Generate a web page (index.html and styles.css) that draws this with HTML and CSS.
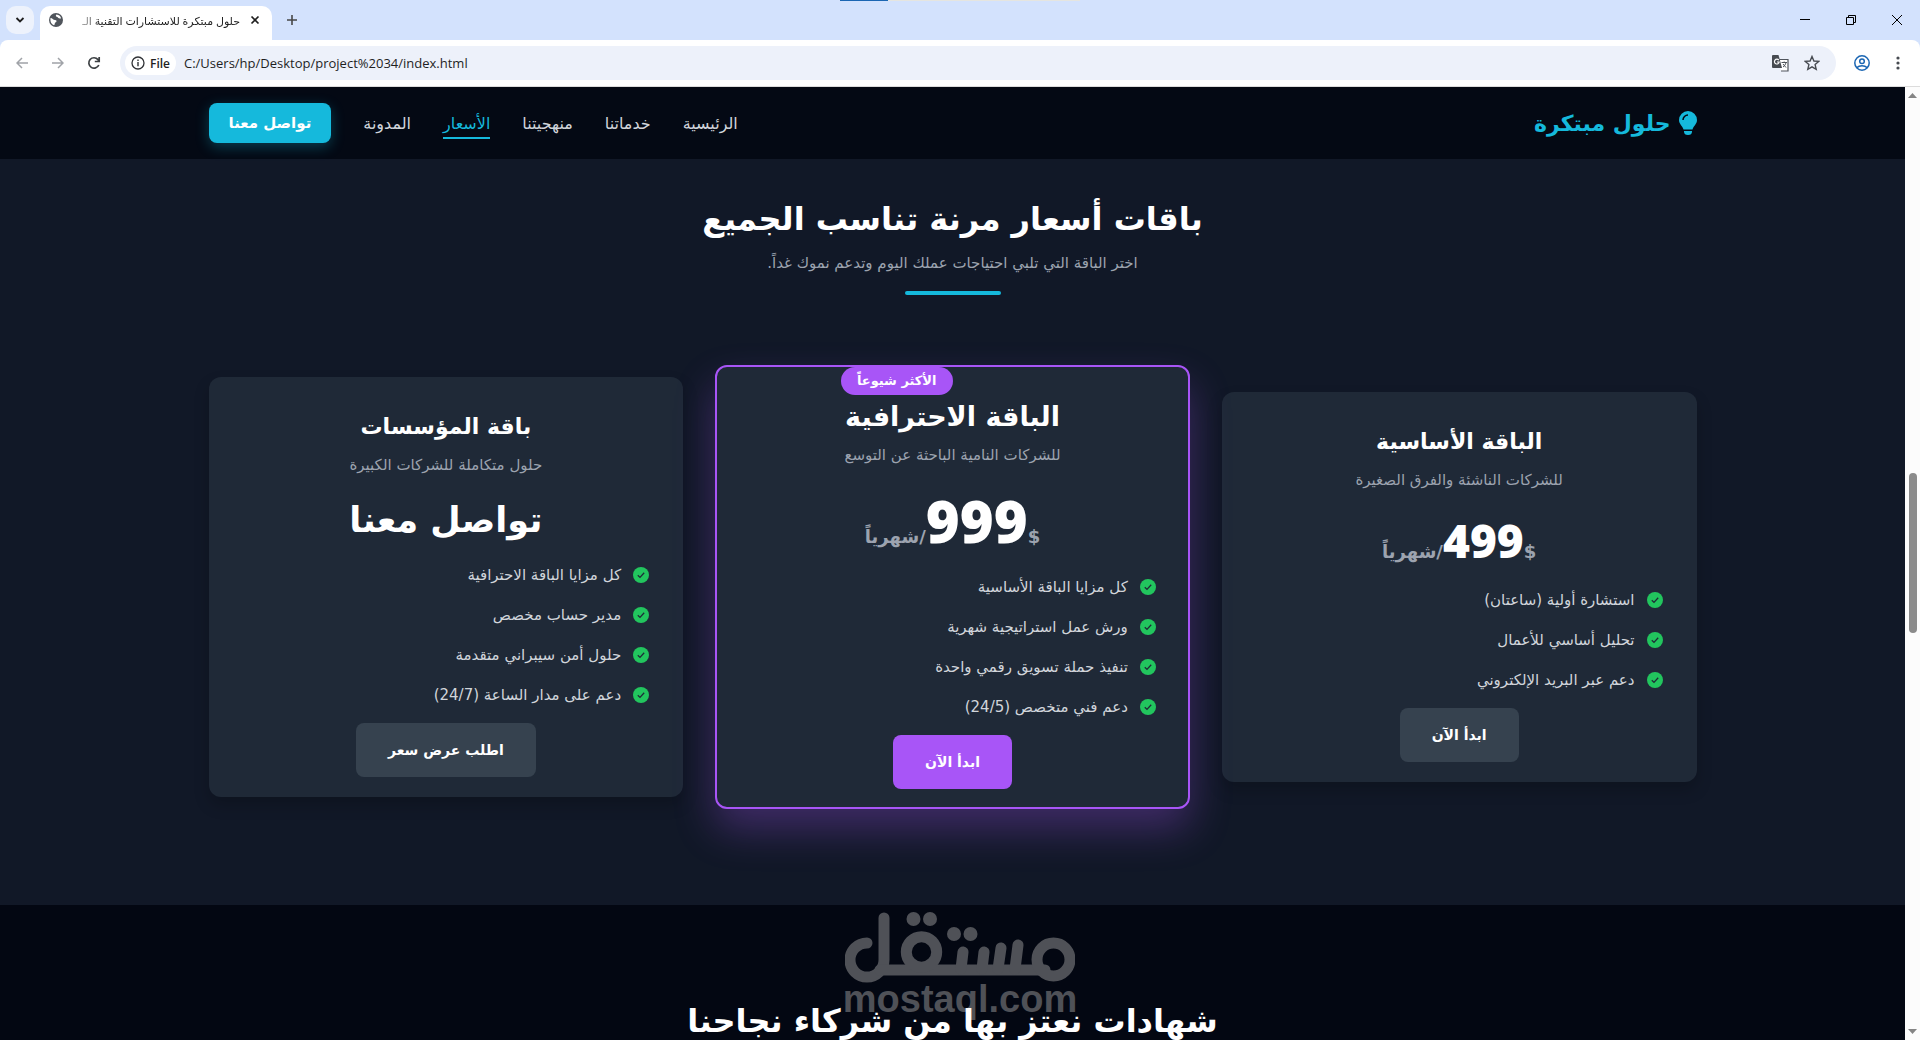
FILE: index.html
```html
<!DOCTYPE html>
<html lang="ar" dir="rtl">
<head>
    <meta charset="UTF-8">
    <meta name="viewport" content="width=device-width, initial-scale=1.0">
    <title>حلول مبتكرة للاستشارات التقنية</title>
    <link rel="stylesheet" href="styles.css">
</head>
<body>
    <svg class="sprite" aria-hidden="true">
        <symbol id="check" viewBox="0 0 16 16">
            <circle cx="8" cy="8" r="8" fill="#22c55e"/>
            <path d="M4.8 8.3 7 10.4 11.2 5.8" fill="none" stroke="#1f2937" stroke-width="1.3"/>
        </symbol>
    </svg>

    <!-- Browser window -->
    <div class="browser" dir="ltr">
        <div class="load-line"><span></span></div>
        <div class="tab-strip">
            <button class="tab-search" aria-label="Search tabs">
                <svg width="10" height="10" viewBox="0 0 10 10"><path d="M1.5 3 5 6.5 8.5 3" fill="none" stroke="#1f1f1f" stroke-width="1.8"/></svg>
            </button>
            <div class="tab">
                <svg width="14" height="14" viewBox="0 0 14 14">
                    <circle cx="7" cy="7" r="7" fill="#50555c"/>
                    <path d="M1.500 5C3.500 5 4 7 6 7c2 0 2 2 .3 2.500C5.500 10 6 12 5 12.200 2.500 11.500 1 8.500 1.500 5zM7.500 1.500c-1.500 1.500 0 2.500 1 2.500.5 1.500 2 1.500 3.500 1.500C12 3.500 10 1.800 7.500 1.500z" fill="#fff"/>
                </svg>
                <span class="tab-title" dir="rtl">حلول مبتكرة للاستشارات التقنية الـ</span>
                <button class="tab-close" aria-label="Close tab">
                    <svg width="10" height="10" viewBox="0 0 10 10"><path d="M1.500 1.500 8.500 8.500M8.500 1.500 1.500 8.500" stroke="#1f1f1f" stroke-width="1.700"/></svg>
                </button>
            </div>
            <button class="new-tab" aria-label="New tab">
                <svg width="12" height="12" viewBox="0 0 12 12"><path d="M6 1v10M1 6h10" stroke="#474747" stroke-width="1.600"/></svg>
            </button>
            <div class="window-buttons">
                <button aria-label="Minimize"><svg width="10" height="10" viewBox="0 0 10 10"><path d="M0 4.500h10" stroke="#000"/></svg></button>
                <button aria-label="Restore"><svg width="10" height="10" viewBox="0 0 10 10"><path d="M.5 2.500h7v7h-7zM2.500 2.500v-2h7v7h-2" fill="none" stroke="#000"/></svg></button>
                <button aria-label="Close"><svg width="10" height="10" viewBox="0 0 10 10"><path d="M0 0 10 10M10 0 0 10" stroke="#000"/></svg></button>
            </div>
        </div>
        <div class="toolbar">
            <button aria-label="Back"><svg width="12" height="12" viewBox="0 0 12 12"><path d="M12 6H1M6 1 1 6l5 5" fill="none" stroke="#a0a3a8" stroke-width="1.500"/></svg></button>
            <button aria-label="Forward"><svg width="12" height="12" viewBox="0 0 12 12"><path d="M0 6h11M6 1l5 5-5 5" fill="none" stroke="#a0a3a8" stroke-width="1.500"/></svg></button>
            <button aria-label="Reload"><svg width="14" height="14" viewBox="0 0 14 14"><path d="M11.800 9A5.200 5.200 0 1 1 11 3.600L12.200 5M12.200 1v4.500H7.800" fill="none" stroke="#3c4043" stroke-width="1.700"/></svg></button>
            <div class="address-bar">
                <button class="site-info">
                    <svg width="14" height="14" viewBox="0 0 14 14"><circle cx="7" cy="7" r="6" fill="none" stroke="#303236" stroke-width="1.300"/><path d="M7 6v4.200M7 3.600v1.400" stroke="#303236" stroke-width="1.400"/></svg>
                    File
                </button>
                <input type="text" aria-label="Address" value="C:/Users/hp/Desktop/project%2034/index.html">
                <button aria-label="Translate">
                    <svg width="17" height="17" viewBox="0 0 17 17">
                        <path d="M7 4.500h9v11.500H9" fill="#fff" stroke="#50555c" stroke-width="1.200"/>
                        <path d="M1 0h5.500L10 13H1a1 1 0 0 1-1-1V1a1 1 0 0 1 1-1z" fill="#474b51"/>
                        <path d="M6.800 5.200A2.400 2.400 0 1 0 7.200 7H5" fill="none" stroke="#fff" stroke-width="1.200"/>
                        <path d="M9.500 7.500H15M12.200 6.500v1M14 7.500c-.5 2-1.500 3.500-3 4.500M11 9l3 3.500" fill="none" stroke="#50555c"/>
                    </svg>
                </button>
                <button aria-label="Bookmark">
                    <svg width="16" height="16" viewBox="0 0 16 16"><path d="M8 1.500 9.900 6l4.800.4-3.600 3.200 1.100 4.700L8 11.800l-4.200 2.500 1.100-4.700L1.300 6.400 6.100 6z" fill="none" stroke="#474b51" stroke-width="1.400"/></svg>
                </button>
            </div>
            <button aria-label="Profile"><svg width="16" height="16" viewBox="0 0 16 16"><g fill="none" stroke="#1b66b3" stroke-width="1.500"><circle cx="8" cy="8" r="7.200"/><circle cx="8" cy="6.300" r="2.300"/><path d="M2.800 12.600C5.500 10.200 10.500 10.200 13.200 12.600"/></g></svg></button>
            <button aria-label="Menu"><svg width="4" height="14" viewBox="0 0 4 14" fill="#474b51"><circle cx="2" cy="2" r="1.600"/><circle cx="2" cy="7" r="1.600"/><circle cx="2" cy="12" r="1.600"/></svg></button>
        </div>
    </div>

    <div class="viewport" dir="ltr">
        <div class="page" dir="rtl">
            <header class="site-header">
                <div class="container header-row">
                    <a href="#" class="logo">
                        <svg width="18" height="24" viewBox="0 0 18 24">
                            <path d="M9 0a9 9 0 0 1 9 9c0 4-3.500 6-4.500 9.500h-9C3.500 15 0 13 0 9a9 9 0 0 1 9-9z" fill="#15b9dc"/>
                            <path d="M4 9a5 5 0 0 1 5-5" fill="none" stroke="#040914" stroke-width="1.500"/>
                            <path d="M5 20h8v.5a4 3.500 0 0 1-8 0z" fill="#15b9dc"/>
                        </svg>
                        حلول مبتكرة
                    </a>
                    <nav class="nav">
                        <a href="#">الرئيسية</a>
                        <a href="#">خدماتنا</a>
                        <a href="#">منهجيتنا</a>
                        <a href="#pricing" class="active">الأسعار</a>
                        <a href="#">المدونة</a>
                        <a href="#" class="contact">تواصل معنا</a>
                    </nav>
                </div>
            </header>

            <main>
                <section class="pricing" id="pricing">
                    <div class="container">
                        <h2>باقات أسعار مرنة تناسب الجميع</h2>
                        <p class="subtitle">اختر الباقة التي تلبي احتياجات عملك اليوم وتدعم نموك غداً.</p>
                        <div class="underline"></div>
                        <div class="plans">
                            <div class="plan">
                                <h3>الباقة الأساسية</h3>
                                <p class="plan-desc">للشركات الناشئة والفرق الصغيرة</p>
                                <div class="price"><span>$</span><b>499</b><span>/شهرياً</span></div>
                                <ul>
                                    <li><svg><use href="#check"/></svg>استشارة أولية (ساعتان)</li>
                                    <li><svg><use href="#check"/></svg>تحليل أساسي للأعمال</li>
                                    <li><svg><use href="#check"/></svg>دعم عبر البريد الإلكتروني</li>
                                </ul>
                                <a href="#" class="plan-button">ابدأ الآن</a>
                            </div>
                            <div class="plan popular">
                                <span class="badge">الأكثر شيوعاً</span>
                                <h3>الباقة الاحترافية</h3>
                                <p class="plan-desc">للشركات النامية الباحثة عن التوسع</p>
                                <div class="price"><span>$</span><b>999</b><span>/شهرياً</span></div>
                                <ul>
                                    <li><svg><use href="#check"/></svg>كل مزايا الباقة الأساسية</li>
                                    <li><svg><use href="#check"/></svg>ورش عمل استراتيجية شهرية</li>
                                    <li><svg><use href="#check"/></svg>تنفيذ حملة تسويق رقمي واحدة</li>
                                    <li><svg><use href="#check"/></svg>دعم فني متخصص (24/5)</li>
                                </ul>
                                <a href="#" class="plan-button">ابدأ الآن</a>
                            </div>
                            <div class="plan">
                                <h3>باقة المؤسسات</h3>
                                <p class="plan-desc">حلول متكاملة للشركات الكبيرة</p>
                                <div class="price price-text">تواصل معنا</div>
                                <ul>
                                    <li><svg><use href="#check"/></svg>كل مزايا الباقة الاحترافية</li>
                                    <li><svg><use href="#check"/></svg>مدير حساب مخصص</li>
                                    <li><svg><use href="#check"/></svg>حلول أمن سيبراني متقدمة</li>
                                    <li><svg><use href="#check"/></svg>دعم على مدار الساعة (24/7)</li>
                                </ul>
                                <a href="#" class="plan-button">اطلب عرض سعر</a>
                            </div>
                        </div>
                    </div>
                </section>

                <section class="testimonials">
                    <h2>شهادات نعتز بها من شركاء نجاحنا</h2>
                </section>
            </main>
        </div>
        <div class="scrollbar">
            <svg width="9" height="5" viewBox="0 0 9 5"><path d="M0 5 4.500 0 9 5z" fill="#858585"/></svg>
            <div class="thumb"></div>
            <svg width="9" height="5" viewBox="0 0 9 5"><path d="M0 0 4.500 5 9 0z" fill="#858585"/></svg>
        </div>
    </div>

    <div class="watermark" dir="ltr">
        <svg width="230" height="71" viewBox="0 0 230 71" role="img" aria-label="مستقل">
            <g fill="none" stroke="#4f5157" stroke-width="11" stroke-linecap="round">
                <path d="M22 31A17 17 0 1 0 39 48V6"/>
                <path d="M35 58H200"/>
                <circle cx="76.500" cy="40" r="15.200"/>
                <circle cx="208.500" cy="47.500" r="16.500"/>
                <path d="M118 40 116 57M139 40 137 57M156 36 153 57M173 33 170 57"/>
            </g>
            <g fill="#4f5157">
                <circle cx="68.500" cy="7" r="7"/><circle cx="85" cy="7" r="7"/>
                <circle cx="109" cy="22" r="7"/><circle cx="125.500" cy="22" r="7"/>
            </g>
        </svg>
        <span>mostaql.com</span>
    </div>
</body>
</html>
```
FILE: styles.css
```css
* {
    box-sizing: border-box;
    margin: 0;
    padding: 0;
}
body {
    font-family: "DejaVu Sans", "Noto Sans", sans-serif;
    display: flex;
    flex-direction: column;
    height: 100vh;
    overflow: hidden;
    background-color: #030712;
    color: white;
    position: relative;
}
a {
    color: inherit;
    text-decoration: none;
}
button {
    border: none;
    background: none;
    display: flex;
    align-items: center;
    justify-content: center;
    cursor: pointer;
}
.sprite {
    display: none;
}

/* Browser */
.browser {
    flex: none;
    background-color: #d3e2fd;
    color: #1f1f1f;
    font-family: "Open Sans", "DejaVu Sans", sans-serif;
    position: relative;
}
.load-line {
    position: absolute;
    top: 0;
    left: 840px;
    width: 240px;
    height: 1px;
    background-color: #e5e5e0;
}
.load-line span {
    display: block;
    width: 20%;
    height: 1px;
    background-color: #1b66b3;
}
.tab-strip {
    display: flex;
    align-items: center;
    height: 40px;
    padding-left: 6px;
}
.tab-search {
    width: 28px;
    height: 28px;
    border-radius: 10px;
    background-color: #edf2fc;
}
.tab {
    display: flex;
    align-items: center;
    gap: 8px;
    align-self: flex-end;
    width: 232px;
    height: 34px;
    margin-left: 6px;
    padding: 0 10px 6px 9px;
    border-radius: 10px 10px 0 0;
    background-color: white;
}
.tab svg {
    flex: none;
}
.tab-title {
    flex: 1;
    overflow: hidden;
    white-space: nowrap;
    font-size: 11px;
    mask-image: linear-gradient(to right, transparent, black 30px);
}
.tab-close {
    width: 14px;
    height: 14px;
}
.new-tab {
    width: 28px;
    height: 28px;
    margin-left: 6px;
}
.window-buttons {
    display: flex;
    margin-left: auto;
}
.window-buttons button {
    width: 46px;
    height: 40px;
}
.toolbar {
    display: flex;
    align-items: center;
    height: 47px;
    padding: 0 4px;
    background-color: white;
    border-bottom: 1px solid #dcdcdc;
    border-radius: 8px 8px 0 0;
}
.toolbar > button {
    width: 36px;
    height: 34px;
}
.address-bar {
    display: flex;
    align-items: center;
    flex: 1;
    height: 34px;
    margin: 0 8px;
    padding: 0 8px 0 5px;
    border-radius: 17px;
    background-color: #edf1fa;
}
.address-bar button {
    width: 32px;
    height: 24px;
}
.address-bar .site-info {
    width: 51px;
    gap: 5px;
    border-radius: 12px;
    background-color: white;
    font-family: inherit;
    font-size: 12px;
    font-weight: 600;
    color: #1f1f1f;
}
.address-bar input {
    flex: 1;
    padding: 0 8px;
    border: none;
    outline: none;
    background: none;
    font-family: inherit;
    font-size: 13px;
    color: #1f1f1f;
}

/* Page */
.viewport {
    flex: 1;
    display: flex;
    min-height: 0;
}
.page {
    flex: 1;
    overflow: hidden;
}
.container {
    max-width: 1536px;
    margin: 0 auto;
    padding: 0 24px;
}
.site-header {
    background-color: #040914;
}
.header-row {
    display: flex;
    align-items: center;
    justify-content: space-between;
    height: 72px;
}
.logo {
    display: flex;
    align-items: center;
    gap: 8px;
    font-size: 22px;
    font-weight: bold;
    color: #15b9dc;
}
.nav {
    display: flex;
    align-items: center;
    gap: 32px;
    font-size: 16px;
    color: #d1d5db;
}
.nav .active {
    padding: 6px 0 4px;
    border-bottom: 2px solid #15b9dc;
    color: #15b9dc;
}
.nav .contact {
    padding: 0 20px;
    line-height: 40px;
    border-radius: 8px;
    background-color: #15b9dc;
    box-shadow: 0 4px 14px rgba(21, 185, 220, 0.3);
    font-size: 15px;
    font-weight: bold;
    color: white;
}
h2 {
    font-size: 32px;
    line-height: 40px;
    text-align: center;
}
.pricing {
    padding: 40px 0 96px;
    background-color: #111827;
}
.subtitle {
    margin-top: 12px;
    font-size: 15px;
    line-height: 24px;
    text-align: center;
    color: #9ca3af;
}
.underline {
    width: 96px;
    height: 4px;
    margin: 16px auto 70px;
    border-radius: 2px;
    background-color: #15b9dc;
}
.plans {
    display: grid;
    grid-template-columns: repeat(3, 1fr);
    align-items: center;
    gap: 32px;
}
.plan {
    display: flex;
    flex-direction: column;
    align-items: center;
    padding: 32px 34px 20px;
    border-radius: 12px;
    background-color: #1f2937;
    box-shadow: 0 8px 16px rgba(0, 0, 0, 0.2);
}
.plan h3 {
    font-size: 22px;
    line-height: 36px;
}
.plan-desc {
    margin-top: 8px;
    font-size: 15px;
    line-height: 24px;
    color: #9ca3af;
}
.price {
    display: flex;
    align-items: baseline;
    margin: 16px 0;
    font-size: 18px;
    font-weight: bold;
    line-height: 24px;
    color: #9ca3af;
}
.price b {
    font-family: "Open Sans", sans-serif;
    font-size: 46px;
    font-weight: 800;
    line-height: 64px;
    color: white;
}
.plan .price-text {
    font-size: 35px;
    line-height: 54px;
    color: white;
}
.plan ul {
    align-self: stretch;
    display: flex;
    flex-direction: column;
    gap: 16px;
    list-style: none;
}
.plan li {
    display: flex;
    align-items: center;
    gap: 12px;
    font-size: 15px;
    line-height: 24px;
    color: #d1d5db;
}
.plan li svg {
    width: 16px;
    height: 16px;
}
.plan-button {
    margin-top: 16px;
    padding: 0 32px;
    border-radius: 8px;
    background-color: #36424f;
    font-size: 14px;
    font-weight: bold;
    line-height: 54px;
}
.popular {
    position: relative;
    padding: 32px 32px 18px;
    border: 2px solid #a855f7;
    box-shadow: 0 20px 40px rgba(168, 85, 247, 0.3);
}
.popular h3 {
    font-size: 27px;
}
.popular .price b {
    font-size: 58px;
    line-height: 76px;
}
.popular .plan-button {
    background-color: #a855f7;
}
.badge {
    position: absolute;
    top: 0;
    right: 50%;
    padding: 0 16px;
    border-radius: 14px;
    background-color: #a855f7;
    font-size: 13px;
    font-weight: bold;
    line-height: 28px;
}
.testimonials {
    padding: 96px 24px;
    background-color: #030712;
}
/* keeps the heading in front of the watermark */
.testimonials h2 {
    position: relative;
    z-index: 2;
}
.scrollbar {
    flex: none;
    display: flex;
    flex-direction: column;
    align-items: center;
    justify-content: space-between;
    width: 15px;
    padding: 6px 0;
    background-color: #fcfcfc;
}
.scrollbar .thumb {
    width: 8px;
    height: 160px;
    margin-bottom: 22px;
    border-radius: 4px;
    background-color: #8b8b8b;
}

.watermark {
    position: absolute;
    z-index: 1;
    top: 912px;
    left: 0;
    right: 0;
    display: flex;
    flex-direction: column;
    align-items: center;
    font-family: "Liberation Sans", sans-serif;
    font-size: 38px;
    font-weight: bold;
    line-height: 32px;
    color: #4f5157;
    pointer-events: none;
}
```
